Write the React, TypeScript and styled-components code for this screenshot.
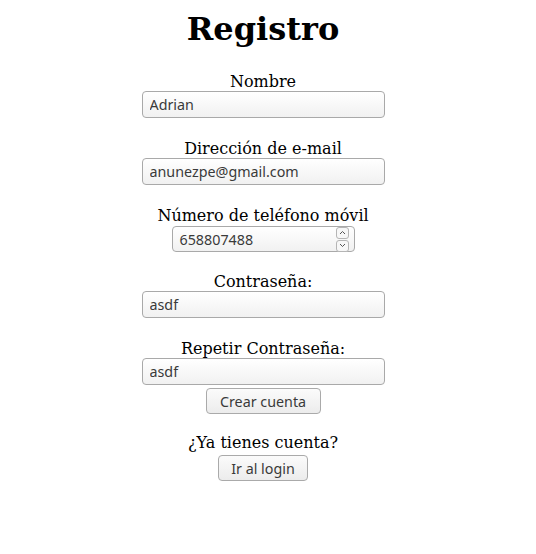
import React from 'react'
import styled, { createGlobalStyle } from 'styled-components'

const GlobalStyle = createGlobalStyle`
  body {
    margin: 8px;
    background: #ffffff;
    font-family: "DejaVu Serif", serif;
    color: #000;
  }
`

const Page = styled.div`
  display: flex;
  flex-direction: column;
  align-items: center;
  padding: 3px 10px 0 0;
`

const Title = styled.h1`
  margin: 0 0 24px 0;
  font-size: 32px;
  font-weight: bold;
  line-height: 37px;
`

const Field = styled.div<{ $gap?: number }>`
  display: flex;
  flex-direction: column;
  align-items: center;
  margin-bottom: ${p => p.$gap ?? 21}px;
`

const Label = styled.label`
  font-size: 16px;
  line-height: 19px;
`

const Input = styled.input<{ $width?: number }>`
  box-sizing: border-box;
  width: ${p => p.$width ?? 243}px;
  height: 27px;
  margin-top: 0;
  padding: 0 7px;
  border: 1px solid #a9a9a9;
  border-radius: 4px;
  background: linear-gradient(#ffffff, #f1f1f1);
  font-family: "Noto Sans", "DejaVu Sans", sans-serif;
  font-size: 14.3px;
  color: #3a3a3a;
  outline: none;
`

const NumberBox = styled.div`
  box-sizing: border-box;
  width: 183px;
  height: 26px;
  margin-top: 1px;
  display: flex;
  align-items: center;
  padding: 0 5px 0 7px;
  border: 1px solid #a9a9a9;
  border-radius: 4px;
  background: linear-gradient(#ffffff, #f1f1f1);
  font-family: "Noto Sans", "DejaVu Sans", sans-serif;
  font-size: 14.3px;
  color: #3a3a3a;
`

const NumberText = styled.span`
  flex: 1;
`

const Spinner = styled.div`
  display: flex;
  flex-direction: column;
  gap: 1px;
`

const SpinButton = styled.div`
  width: 11px;
  height: 10px;
  border: 1px solid #b5b5b5;
  border-radius: 3px;
  background: #f7f7f7;
  display: flex;
  align-items: center;
  justify-content: center;
`

const Button = styled.button<{ $width: number }>`
  box-sizing: border-box;
  width: ${p => p.$width}px;
  height: 26px;
  margin-top: 3px;
  padding: 0;
  border: 1px solid #aaaaaa;
  border-radius: 4px;
  background: linear-gradient(#fbfbfb, #ececec);
  font-family: "Noto Sans", "DejaVu Sans", sans-serif;
  font-size: 14.3px;
  color: #3a3a3a;
`

const Chevron = ({ up }: { up?: boolean }) => (
  <svg width="7" height="5" viewBox="0 0 7 5">
    <path
      d={up ? 'M1 4 L3.5 1.5 L6 4' : 'M1 1 L3.5 3.5 L6 1'}
      fill="none"
      stroke="#555"
      strokeWidth="1"
    />
  </svg>
)

export default function App() {
  return (
    <>
      <GlobalStyle />
      <Page>
        <Title>Registro</Title>
        <Field>
          <Label>Nombre</Label>
          <Input type="text" defaultValue="Adrian" />
        </Field>
        <Field>
          <Label>Dirección de e-mail</Label>
          <Input type="text" defaultValue="anunezpe@gmail.com" />
        </Field>
        <Field $gap={20}>
          <Label>Número de teléfono móvil</Label>
          <NumberBox>
            <NumberText>658807488</NumberText>
            <Spinner>
              <SpinButton><Chevron up /></SpinButton>
              <SpinButton><Chevron /></SpinButton>
            </Spinner>
          </NumberBox>
        </Field>
        <Field>
          <Label>Contraseña:</Label>
          <Input type="text" defaultValue="asdf" />
        </Field>
        <Field $gap={19}>
          <Label>Repetir Contraseña:</Label>
          <Input type="text" defaultValue="asdf" />
          <Button $width={115}>Crear cuenta</Button>
        </Field>
        <Field>
          <Label>¿Ya tienes cuenta?</Label>
          <Button $width={90}>Ir al login</Button>
        </Field>
      </Page>
    </>
  )
}
